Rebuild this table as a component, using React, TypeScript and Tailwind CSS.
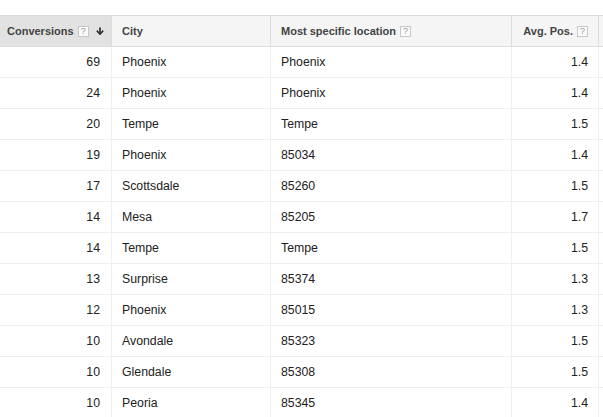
import React from "react";

type Row = { conv: number; city: string; loc: string; pos: string };

const rows: Row[] = [
  { conv: 69, city: "Phoenix", loc: "Phoenix", pos: "1.4" },
  { conv: 24, city: "Phoenix", loc: "Phoenix", pos: "1.4" },
  { conv: 20, city: "Tempe", loc: "Tempe", pos: "1.5" },
  { conv: 19, city: "Phoenix", loc: "85034", pos: "1.4" },
  { conv: 17, city: "Scottsdale", loc: "85260", pos: "1.5" },
  { conv: 14, city: "Mesa", loc: "85205", pos: "1.7" },
  { conv: 14, city: "Tempe", loc: "Tempe", pos: "1.5" },
  { conv: 13, city: "Surprise", loc: "85374", pos: "1.3" },
  { conv: 12, city: "Phoenix", loc: "85015", pos: "1.3" },
  { conv: 10, city: "Avondale", loc: "85323", pos: "1.5" },
  { conv: 10, city: "Glendale", loc: "85308", pos: "1.5" },
  { conv: 10, city: "Peoria", loc: "85345", pos: "1.4" },
];

function Help() {
  return (
    <span className="ml-[4px] inline-flex h-[11px] w-[11px] items-center justify-center border border-[#c8c8c8] bg-[#fafafa] text-[9px] font-normal leading-none text-[#999]">
      ?
    </span>
  );
}

function SortArrow() {
  return (
    <svg width="8" height="8" viewBox="0 0 8 8" className="ml-[7px]">
      <path d="M4 0.5v6" stroke="#333" strokeWidth="1.8" />
      <path d="M0.8 3.6L4 7.2L7.2 3.6" fill="none" stroke="#333" strokeWidth="1.6" />
    </svg>
  );
}

export default function App() {
  return (
    <div
      className="h-[417px] w-[603px] overflow-hidden bg-white pt-[15px] text-[12.3px] text-[#222]"
      style={{ fontFamily: '"Liberation Sans", Arial, sans-serif' }}
    >
      {/* header */}
      <div className="flex h-[32px] border-y border-[#dcdcdc] text-[11px] font-bold text-[#444]">
        <div className="flex w-[112px] shrink-0 items-center border-r border-[#dcdcdc] bg-[#e2e2e2] pl-[7px]">
          Conversions
          <Help />
          <SortArrow />
        </div>
        <div className="flex w-[159px] shrink-0 items-center border-r border-[#dcdcdc] bg-[#f5f5f5] pl-[10px]">
          City
        </div>
        <div className="flex w-[241px] shrink-0 items-center border-r border-[#dcdcdc] bg-[#f5f5f5] pl-[10px]">
          Most specific location
          <Help />
        </div>
        <div className="flex w-[87px] shrink-0 items-center justify-end border-r border-[#dcdcdc] bg-[#f5f5f5] pr-[10px]">
          Avg. Pos.
          <Help />
        </div>
        <div className="flex-1 bg-[#f5f5f5]" />
      </div>

      {/* body */}
      {rows.map((r, i) => (
        <div key={i} className="flex h-[31px] border-b border-[#efefef]">
          <div className="flex w-[112px] shrink-0 items-center justify-end border-r border-[#efefef] pr-[11px]">
            {r.conv}
          </div>
          <div className="flex w-[159px] shrink-0 items-center border-r border-[#efefef] pl-[10px]">
            {r.city}
          </div>
          <div className="flex w-[241px] shrink-0 items-center border-r border-[#efefef] pl-[10px]">
            {r.loc}
          </div>
          <div className="flex w-[87px] shrink-0 items-center justify-end border-r border-[#efefef] pr-[10px]">
            {r.pos}
          </div>
          <div className="flex-1" />
        </div>
      ))}
    </div>
  );
}
